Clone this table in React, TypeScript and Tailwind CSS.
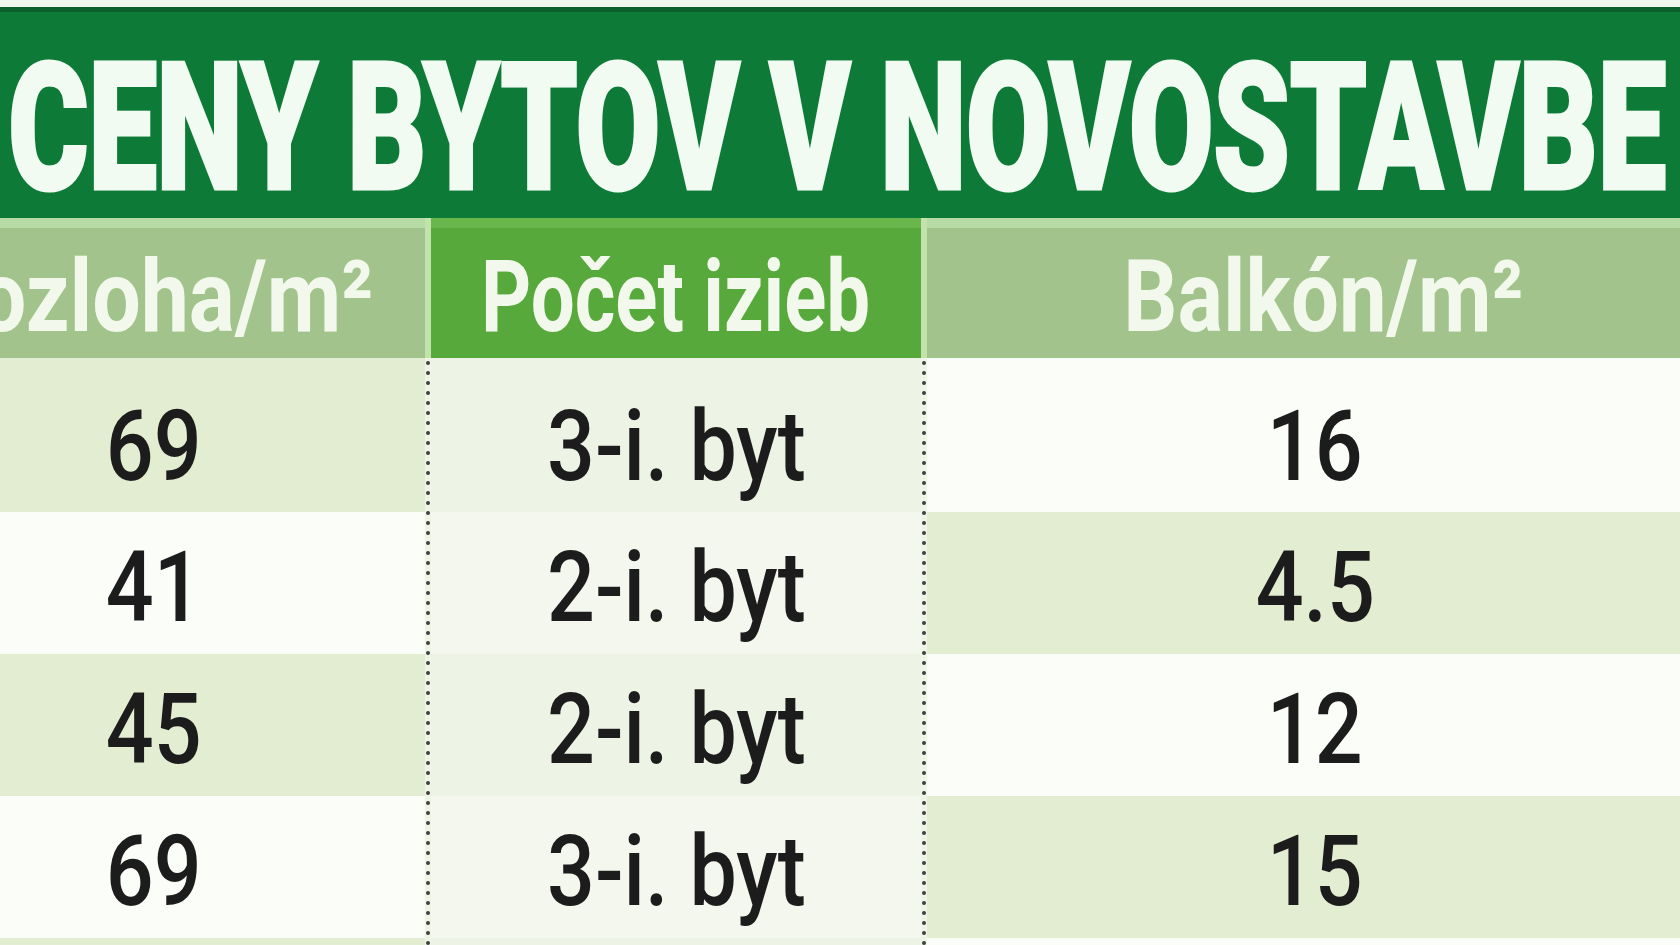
import React from "react";

const rows: [string, string, string][] = [
  ["69", "3-i. byt", "16"],
  ["41", "2-i. byt", "4.5"],
  ["45", "2-i. byt", "12"],
  ["69", "3-i. byt", "15"],
  ["", "", ""],
];

const rowCls = (i: number) => (i === 0 ? "h-[154px] pt-[40px]" : "h-[142px] pt-[27px]");

function Cell({ text, bg, cls, shift = "" }: { text: string; bg: string; cls: string; shift?: string }) {
  return (
    <div className={`${cls} ${bg} ${shift} flex justify-center items-start`}>
      <span className="inline-block scale-x-[0.86] whitespace-nowrap text-[98px] leading-none font-medium text-[#1c1c1c]">
        {text}
      </span>
    </div>
  );
}

function Header({
  text,
  bg,
  strip,
  scale,
  shift = "",
}: {
  text: string;
  bg: string;
  strip: string;
  scale: string;
  shift?: string;
}) {
  return (
    <div className={`h-[140px] ${bg} flex flex-col`}>
      <div className={`h-[10px] ${strip}`} />
      <div className={`flex-1 flex justify-center items-start pt-[19px] ${shift}`}>
        <span className={`inline-block ${scale} whitespace-nowrap text-[100px] leading-none font-bold text-[#f2f9ec]`}>
          {text}
        </span>
      </div>
    </div>
  );
}

function Divider() {
  return (
    <div className="w-[6px] flex flex-col shrink-0">
      <div className="h-[140px] bg-[#c3e3ad]" />
      <div className="flex-1 bg-[#eef4e6]">
        <svg className="w-full h-full block" xmlns="http://www.w3.org/2000/svg">
          <defs>
            <pattern id="dots" x="0" y="0" width="6" height="10" patternUnits="userSpaceOnUse">
              <circle cx="3" cy="5" r="2" fill="#404040" />
            </pattern>
          </defs>
          <rect x="0" y="0" width="100%" height="100%" fill="url(#dots)" />
        </svg>
      </div>
    </div>
  );
}

export default function App() {
  return (
    <div
      className="w-[1680px] h-[945px] overflow-hidden bg-[#f3f8ef]"
      style={{ fontFamily: "Roboto, 'Liberation Sans', sans-serif" }}
    >
      <div className="h-[7px] bg-[#eef6ee]" />
      <div className="h-[211px] bg-[#0e7a37] border-t-[5px] border-[#0a5f2b] flex items-start pt-[27px] pl-[8px]">
        <span className="inline-block origin-left scale-x-[0.688] whitespace-nowrap text-[179px] leading-none font-black text-[#f1fbf2] tracking-[-1px] [-webkit-text-stroke:3px_#f1fbf2]">
          CENY BYTOV V NOVOSTAVBE
        </span>
      </div>
      <div className="flex ml-[-118px]">
        <div className="w-[543px] flex flex-col shrink-0">
          <Header text="Rozloha/m²" bg="bg-[#a2c38b]" strip="bg-[#b7dba4]" scale="scale-x-[0.86]" shift="pr-[10px]" />
          {rows.map((r, i) => (
            <Cell key={i} text={r[0]} cls={rowCls(i)} bg={i % 2 === 0 ? "bg-[#e3edd1]" : "bg-[#fbfdf8]"} />
          ))}
        </div>
        <Divider />
        <div className="w-[490px] flex flex-col shrink-0">
          <Header text="Počet izieb" bg="bg-[#56a93a]" strip="bg-[#69b64d]" scale="scale-x-[0.78]" />
          {rows.map((r, i) => (
            <Cell key={i} text={r[1]} cls={rowCls(i)} bg={i % 2 === 0 ? "bg-[#eef4e5]" : "bg-[#f3f7ee]"} />
          ))}
        </div>
        <Divider />
        <div className="w-[790px] flex flex-col shrink-0">
          <Header text="Balkón/m²" bg="bg-[#a2c38b]" strip="bg-[#b7dba4]" scale="scale-x-[0.85]" shift="pl-[2px]" />
          {rows.map((r, i) => (
            <Cell key={i} text={r[2]} cls={rowCls(i)} bg={i % 2 === 0 ? "bg-[#fbfdf8]" : "bg-[#e3edd1]"} shift="pr-[14px]" />
          ))}
        </div>
      </div>
    </div>
  );
}
